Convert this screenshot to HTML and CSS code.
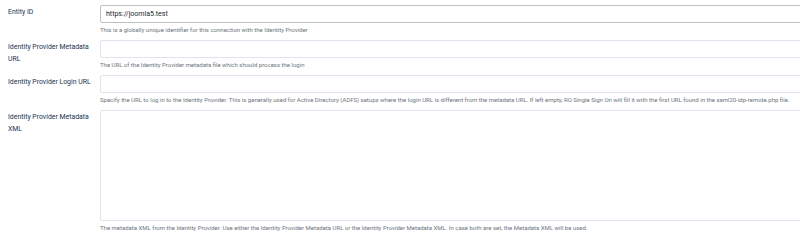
FILE: index.html
```html
<!DOCTYPE html>
<html lang="en">
<head>
    <meta charset="UTF-8">
    <title>SAML Identity Provider</title>
    <link rel="stylesheet" href="styles.css">
</head>
<body>
    <div class="form-container">
        <div class="control-group">
            <label class="control-label" for="entity-id">Entity ID</label>
            <div class="controls">
                <input class="form-control filled" id="entity-id" type="text" value="https://joomla5.test">
                <div class="form-text">This is a globally unique identifier for this connection with the Identity Provider</div>
            </div>
        </div>
        <div class="control-group">
            <label class="control-label" for="metadata-url">Identity Provider Metadata URL</label>
            <div class="controls">
                <input class="form-control" id="metadata-url" type="text">
                <div class="form-text">The URL of the Identity Provider metadata file which should process the login</div>
            </div>
        </div>
        <div class="control-group">
            <label class="control-label" for="login-url">Identity Provider Login URL</label>
            <div class="controls">
                <input class="form-control" id="login-url" type="text">
                <div class="form-text">Specify the URL to log in to the Identity Provider. This is generally used for Active Directory (ADFS) setups where the login URL is different from the metadata URL. If left empty, RO Single Sign On will fill it with the first URL found in the saml20-idp-remote.php file.</div>
            </div>
        </div>
        <div class="control-group">
            <label class="control-label" for="metadata-xml">Identity Provider Metadata XML</label>
            <div class="controls">
                <textarea class="form-control xml" id="metadata-xml"></textarea>
                <div class="form-text">The metadata XML from the Identity Provider. Use either the Identity Provider Metadata URL or the Identity Provider Metadata XML. In case both are set, the Metadata XML will be used.</div>
            </div>
        </div>
    </div>
</body>
</html>
```

FILE: styles.css
```css
body {
    margin: 0;
    background-color: #fff;
    font-family: Roboto, "Liberation Sans", sans-serif;
    overflow: hidden;
}

.form-container {
    padding: 5px 0 0 8px;
    width: 830px;
}

.control-group {
    display: flex;
    flex-direction: row;
    margin-bottom: 6px;
}

.control-label {
    width: 92px;
    flex-shrink: 0;
    padding-top: 1px;
    padding-right: 4px;
    box-sizing: border-box;
    font-size: 6.9px;
    line-height: 12px;
    color: #22344f;
}

.controls {
    flex: 1;
}

.form-control {
    display: block;
    box-sizing: border-box;
    width: 100%;
    height: 18px;
    margin: 0;
    padding: 0 5px;
    border: 1px solid #dfe5ef;
    border-radius: 2px;
    background-color: #fff;
    font-family: Roboto, "Liberation Sans", sans-serif;
    font-size: 7px;
    color: #22262a;
    outline: none;
}

.form-control.filled {
    border-color: #b9c4bd;
}

.form-control.xml {
    height: 111px;
    resize: none;
}

.form-text {
    margin-top: 2px;
    font-size: 6px;
    line-height: 9px;
    color: #6d757e;
    white-space: nowrap;
}
```
